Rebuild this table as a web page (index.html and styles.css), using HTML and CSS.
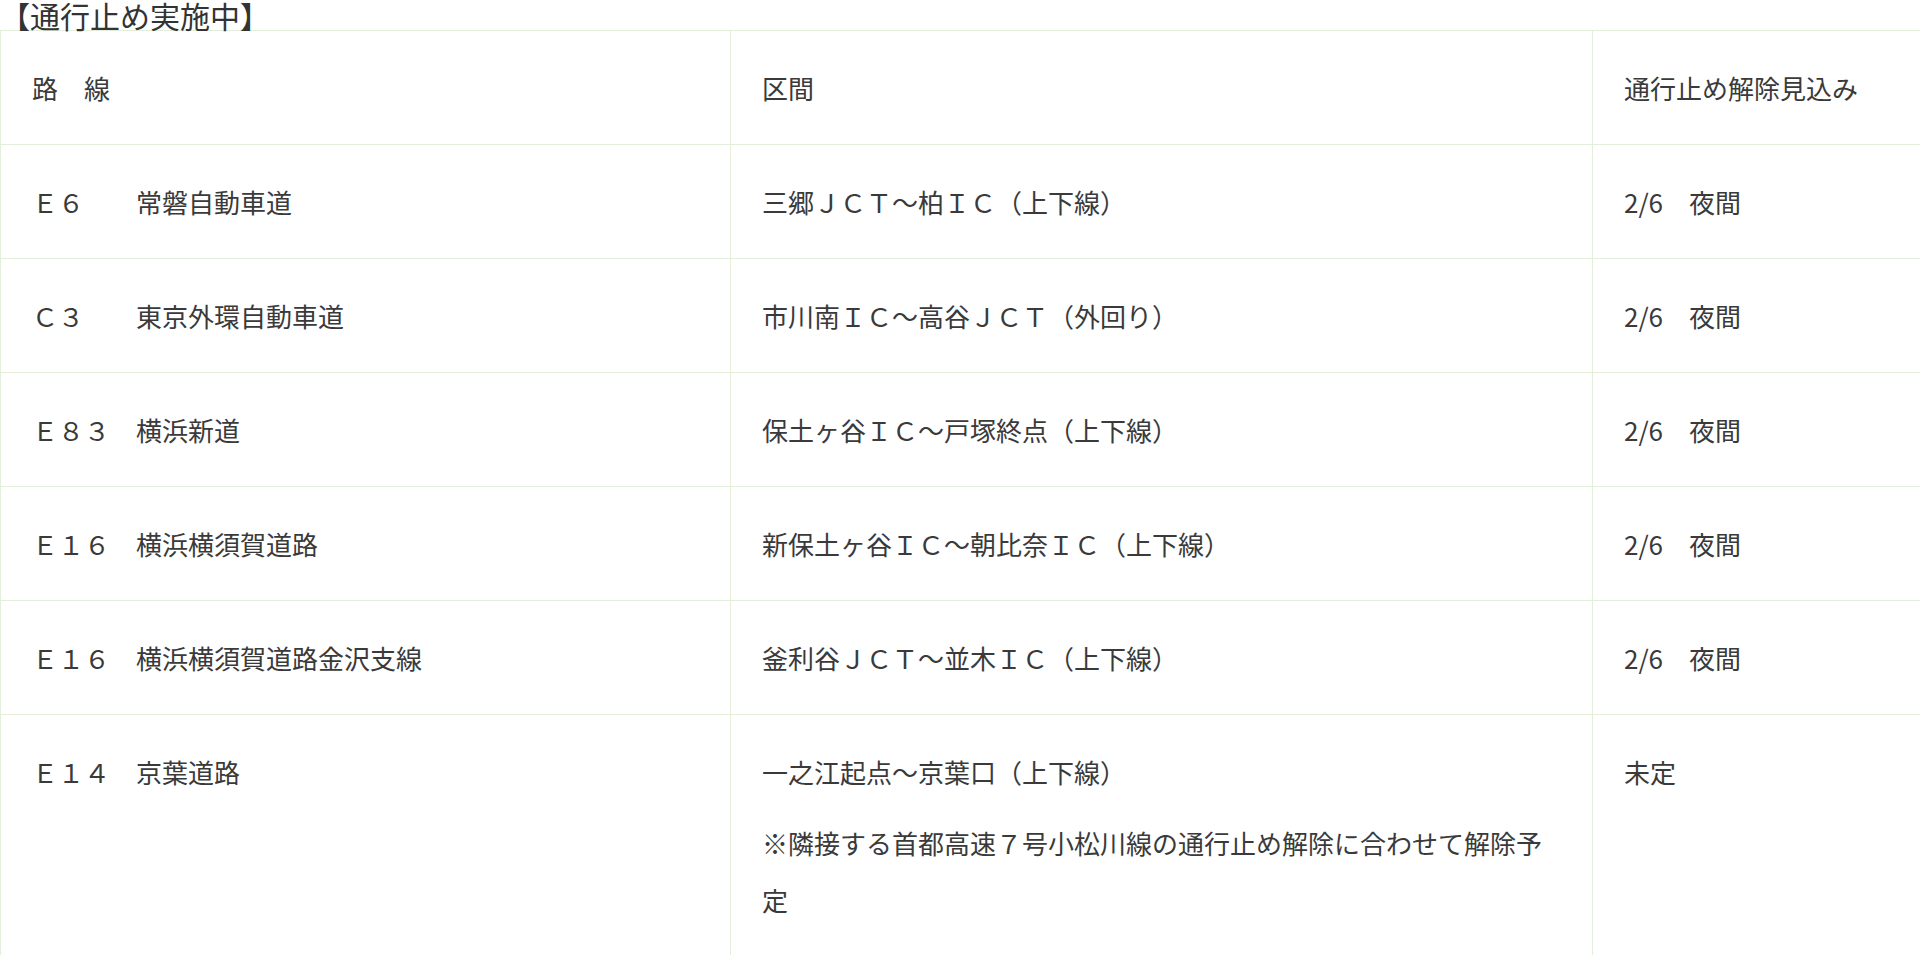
FILE: index.html
```html
<!DOCTYPE html>
<html lang="ja">
<head>
<meta charset="utf-8">
<title>通行止め実施中</title>
<link rel="stylesheet" href="styles.css">
</head>
<body>
<p class="heading">【通行止め実施中】</p>
<table class="closures">
  <colgroup>
    <col class="col-route">
    <col class="col-section">
    <col class="col-eta">
  </colgroup>
  <tr>
    <td>路　線</td>
    <td>区間</td>
    <td>通行止め解除見込み</td>
  </tr>
  <tr>
    <td>Ｅ６　　常磐自動車道</td>
    <td>三郷ＪＣＴ～柏ＩＣ（上下線）</td>
    <td>2/6　夜間</td>
  </tr>
  <tr>
    <td>Ｃ３　　東京外環自動車道</td>
    <td>市川南ＩＣ～高谷ＪＣＴ（外回り）</td>
    <td>2/6　夜間</td>
  </tr>
  <tr>
    <td>Ｅ８３　横浜新道</td>
    <td>保土ヶ谷ＩＣ～戸塚終点（上下線）</td>
    <td>2/6　夜間</td>
  </tr>
  <tr>
    <td>Ｅ１６　横浜横須賀道路</td>
    <td>新保土ヶ谷ＩＣ～朝比奈ＩＣ（上下線）</td>
    <td>2/6　夜間</td>
  </tr>
  <tr>
    <td>Ｅ１６　横浜横須賀道路金沢支線</td>
    <td>釜利谷ＪＣＴ～並木ＩＣ（上下線）</td>
    <td>2/6　夜間</td>
  </tr>
  <tr>
    <td>Ｅ１４　京葉道路</td>
    <td>
      <p class="para">一之江起点～京葉口（上下線）</p>
      <p class="para">※隣接する首都高速７号小松川線の通行止め解除に合わせて解除予定</p>
    </td>
    <td>未定</td>
  </tr>
</table>
</body>
</html>
```

FILE: styles.css
```css
html, body {
  margin: 0;
  padding: 0;
  background: #ffffff;
}

body {
  font-family: "Noto Sans CJK JP", "Noto Sans", sans-serif;
  color: #3a3a3a;
}

.heading {
  margin: 0;
  font-size: 30px;
  line-height: 30px;
  color: #333333;
}

.closures {
  width: 1920px;
  border-collapse: collapse;
  table-layout: fixed;
  font-size: 26px;
  line-height: 57px;
}

.col-route { width: 730px; }
.col-section { width: 862px; }
.col-eta { width: 328px; }

.closures td {
  border: 1px solid #e3efda;
  padding: 28px 30px 28px 31px;
  vertical-align: top;
  text-align: left;
}

.para {
  margin: 0;
}

.para + .para {
  margin-top: 14px;
}
```
